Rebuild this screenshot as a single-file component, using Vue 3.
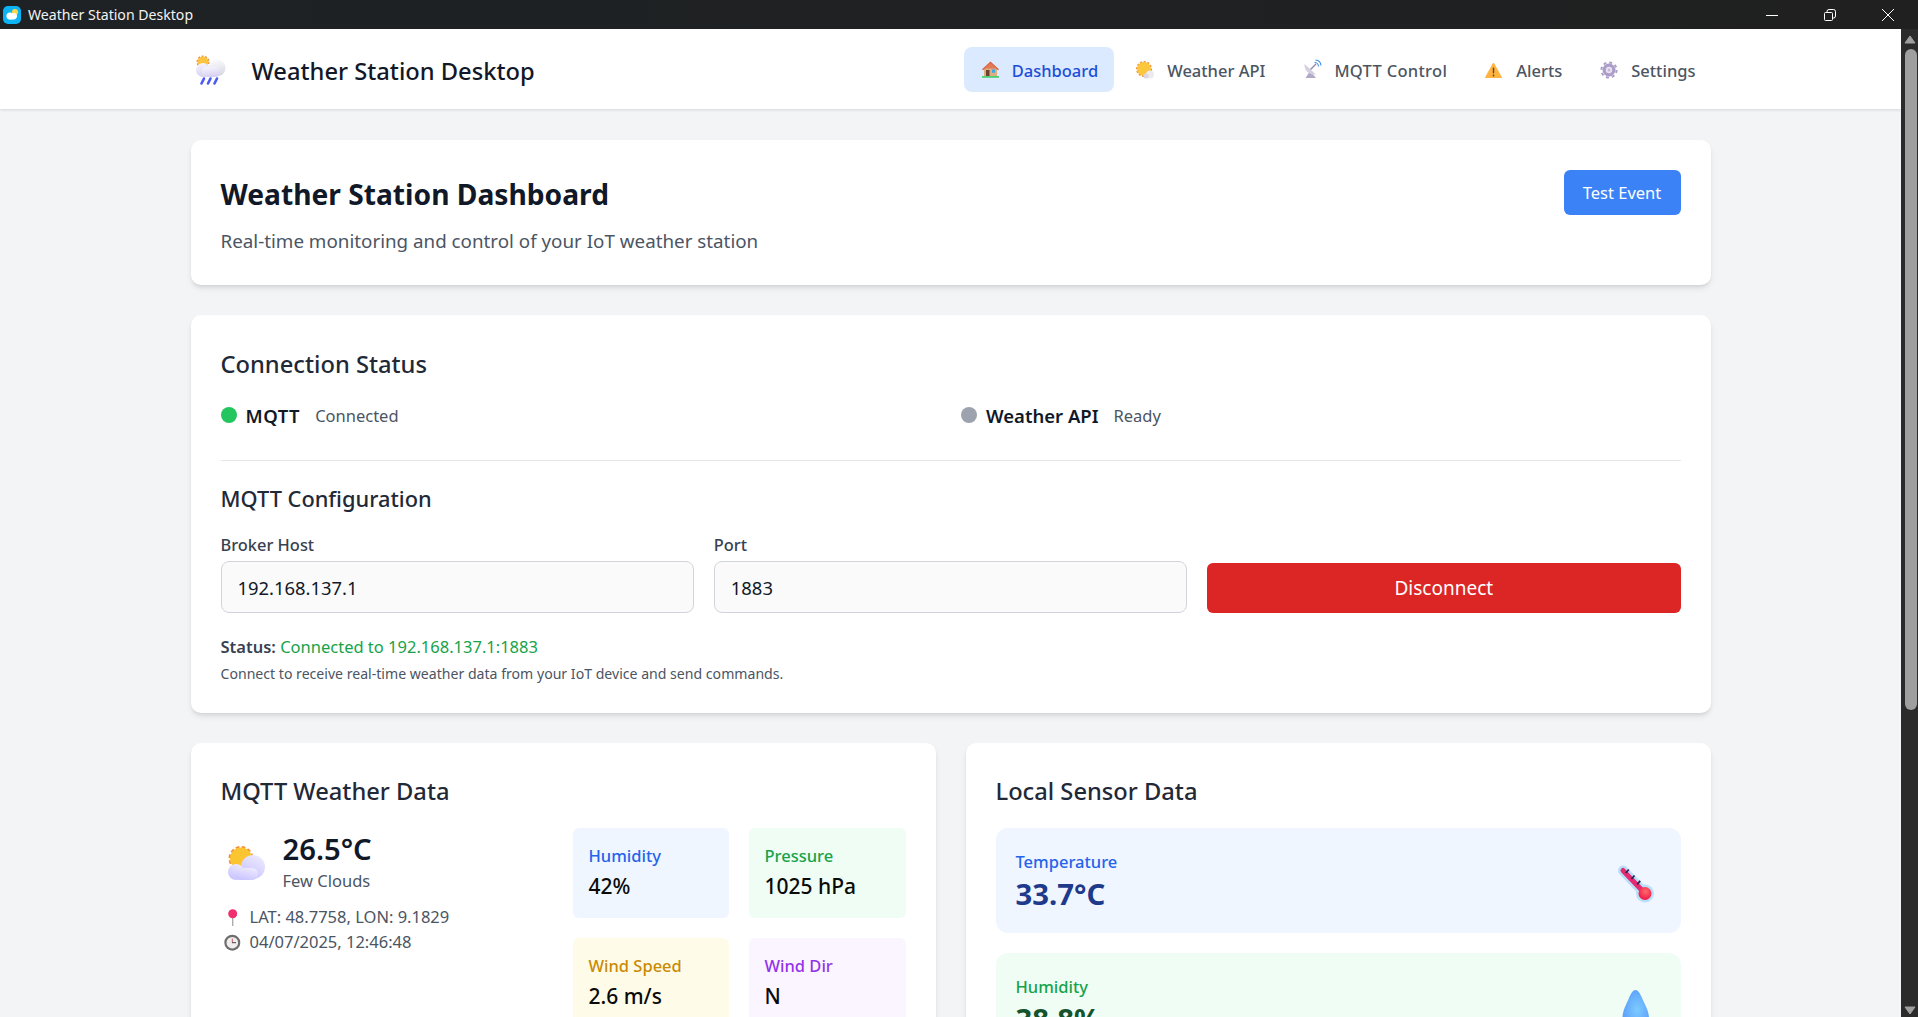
<script setup>
const navItems = [
  { key: 'home', label: 'Dashboard', active: true },
  { key: 'sun', label: 'Weather API' },
  { key: 'dish', label: 'MQTT Control' },
  { key: 'warn', label: 'Alerts' },
  { key: 'gear', label: 'Settings' }
]
const tiles = [
  { label: 'Humidity', value: '42%', cls: 'blue' },
  { label: 'Pressure', value: '1025 hPa', cls: 'green' },
  { label: 'Wind Speed', value: '2.6 m/s', cls: 'yellow' },
  { label: 'Wind Dir', value: 'N', cls: 'purple' }
]
</script>

<template>
  <div class="window">
    <header class="titlebar">
      <div class="app-id">
        <svg class="app-icon" viewBox="0 0 18 18">
          <rect width="18" height="18" rx="5" fill="#0db4f5" />
          <circle cx="12" cy="6" r="3" fill="#ffd84a" />
          <circle cx="7" cy="10" r="3.6" fill="#fff" />
          <circle cx="11" cy="10" r="3" fill="#fff" />
          <rect x="5" y="9.6" width="8" height="4" rx="2" fill="#fff" />
        </svg>
        <span>Weather Station Desktop</span>
      </div>
      <div class="controls">
        <svg viewBox="0 0 12 12"><path d="M0 6.500h12" stroke="#fff" fill="none" /></svg>
        <svg viewBox="0 0 12 12"><path d="M.5 4.500a1 1 0 0 1 1-1h6a1 1 0 0 1 1 1v6a1 1 0 0 1-1 1h-6a1 1 0 0 1-1-1zM3 3.500v-1a2 2 0 0 1 2-2h4.500a2 2 0 0 1 2 2v4.500a2 2 0 0 1-2 2h-1" stroke="#fff" fill="none" /></svg>
        <svg viewBox="0 0 12 12"><path d="M0 0l12 12M12 0L0 12" stroke="#fff" fill="none" /></svg>
      </div>
    </header>

    <div class="viewport">
      <div class="page">
        <nav class="nav">
          <div class="nav-inner">
            <div class="brand">
              <svg class="brand-icon" viewBox="0 0 33 33">
                <defs>
                  <linearGradient id="bc1" x1="0.4" y1="0" x2="0.6" y2="1"><stop offset="0" stop-color="#fbfbfd" /><stop offset="1" stop-color="#d6d6e2" /></linearGradient>
                  <linearGradient id="bc2" x1="0.4" y1="0" x2="0.6" y2="1"><stop offset="0" stop-color="#f5f3fb" /><stop offset="1" stop-color="#d5cff2" /></linearGradient>
                </defs>
                <circle cx="8" cy="9" r="5.500" fill="none" stroke="#ef8f3b" stroke-width="2" stroke-dasharray="2 1.400" />
                <circle cx="8" cy="9" r="5.500" fill="#fcc440" />
                <circle cx="22" cy="15" r="8.500" fill="url(#bc1)" />
                <circle cx="8" cy="17" r="7" fill="url(#bc2)" />
                <rect x="7" y="14" width="17" height="10" rx="4" fill="url(#bc2)" />
                <path d="M9 25.500l-2.500 5M15.500 25.500l-2.500 5M22 25.500l-2.500 5" stroke="#4a5af5" stroke-width="2.600" stroke-linecap="round" />
              </svg>
              <span class="brand-name">Weather Station Desktop</span>
            </div>
            <ul class="nav-list">
              <li v-for="n in navItems" :key="n.key" class="nav-item" :class="{ active: n.active }">
                <svg class="nav-icon" viewBox="0 0 20 20">
                  <template v-if="n.key === 'home'">
                    <rect x="2" y="17" width="17" height="1.800" fill="#4ccf70" />
                    <path d="M4 9h13v8H4z" fill="#dcae80" />
                    <path d="M1.800 10.500L10.500 2.500l8.700 8-1.500.5-7.200-5.500L3.300 11z" fill="#d9603f" />
                    <path d="M4 9.500l6.500-5.500 6.500 5.500z" fill="#e27a55" />
                    <rect x="6" y="11" width="3.500" height="6" fill="#6e4230" />
                    <rect x="12" y="10.500" width="3" height="3.200" fill="#3ea6e6" />
                  </template>
                  <template v-else-if="n.key === 'sun'">
                    <circle cx="9" cy="10" r="7" fill="none" stroke="#ef8f3b" stroke-width="2" stroke-dasharray="2 1.600" />
                    <circle cx="9" cy="10" r="7" fill="#fcc63d" />
                    <circle cx="15" cy="15.500" r="4" fill="#eeeaf0" />
                    <circle cx="11" cy="17" r="2.600" fill="#dcd8e2" />
                  </template>
                  <template v-else-if="n.key === 'dish'">
                    <path d="M3.500 19L8 12l6 7z" fill="#b3a9c6" />
                    <path d="M2.500 5C2 11 7 16.500 14 15.500z" fill="#d5cfe0" />
                    <path d="M8.500 10.500L14 5" stroke="#8e82a8" stroke-width="1.200" />
                    <path d="M12.500 3.500a4 4 0 0 1 4 4M13.500 1a6 6 0 0 1 5.500 5.500" stroke="#3f8ee8" stroke-width="1.100" fill="none" />
                  </template>
                  <template v-else-if="n.key === 'warn'">
                    <path d="M9.500 4L17.500 18.500H1.500z" fill="#ffb340" stroke="#ffb340" stroke-linejoin="round" />
                    <rect x="8.800" y="8.500" width="1.400" height="6" rx=".7" fill="#5a4632" />
                    <circle cx="9.500" cy="16.500" r=".9" fill="#5a4632" />
                  </template>
                  <template v-else>
                    <circle cx="10" cy="11" r="6.500" fill="#ab9dc8" />
                    <circle cx="10" cy="11" r="7.600" fill="none" stroke="#ab9dc8" stroke-width="2" stroke-dasharray="3 2.970" />
                    <circle cx="10" cy="11" r="3.200" fill="#e9e2f2" />
                    <circle cx="10" cy="11" r="1.500" fill="#c4b8d8" />
                  </template>
                </svg>
                <span class="nav-label">{{ n.label }}</span>
              </li>
            </ul>
          </div>
        </nav>

        <main class="content">
          <section class="card hero">
            <div>
              <h1>Weather Station Dashboard</h1>
              <p>Real-time monitoring and control of your IoT weather station</p>
            </div>
            <button class="btn-test">Test Event</button>
          </section>

          <section class="card conn">
            <h2>Connection Status</h2>
            <div class="conn-row">
              <div class="conn-cell"><i class="dot on"></i><b>MQTT</b><span>Connected</span></div>
              <div class="conn-cell"><i class="dot off"></i><b>Weather API</b><span>Ready</span></div>
            </div>
            <hr />
            <h3>MQTT Configuration</h3>
            <div class="form-row">
              <label>Broker Host<input value="192.168.137.1" /></label>
              <label>Port<input value="1883" /></label>
              <button class="btn-dis">Disconnect</button>
            </div>
            <p class="status"><b>Status:</b> <span>Connected to 192.168.137.1:1883</span></p>
            <p class="note">Connect to receive real-time weather data from your IoT device and send commands.</p>
          </section>

          <div class="two">
            <section class="card data">
              <h2>MQTT Weather Data</h2>
              <div class="mqtt-grid">
                <div class="now">
                  <div class="now-main">
                    <svg class="cloud-sun" viewBox="0 0 40 40">
                      <defs>
                        <linearGradient id="cl" x1="0.7" y1="0" x2="0.2" y2="1"><stop offset="0" stop-color="#ece9ff" /><stop offset="1" stop-color="#c7c2ff" /></linearGradient>
                      </defs>
                      <circle cx="15" cy="14.500" r="11" fill="none" stroke="#ef8f3b" stroke-width="3" stroke-dasharray="3.500 2.300" />
                      <circle cx="15" cy="14.500" r="11" fill="#fbc531" />
                      <circle cx="27" cy="23" r="12" fill="url(#cl)" />
                      <circle cx="10" cy="28" r="8" fill="url(#cl)" />
                      <rect x="8" y="24" width="24" height="12" rx="6" fill="url(#cl)" />
                    </svg>
                    <div class="now-text">
                      <div class="temp">26.5°C</div>
                      <div class="cond">Few Clouds</div>
                    </div>
                  </div>
                  <div class="meta">
                    <svg viewBox="0 0 18 18">
                      <path d="M8.700 9v9" stroke="#a8a8a8" stroke-width="1.300" />
                      <circle cx="8.700" cy="5.700" r="4.500" fill="#ef2f6e" />
                    </svg>
                    <span>LAT: 48.7758, LON: 9.1829</span>
                  </div>
                  <div class="meta">
                    <svg viewBox="0 0 18 18">
                      <circle cx="8.300" cy="9.700" r="8" fill="#6e6e6e" />
                      <circle cx="8.300" cy="9.700" r="5.800" fill="#f2eded" />
                      <path d="M8.300 5.500v4.200" stroke="#c25a6a" stroke-width="1" fill="none" />
                      <path d="M8 9.700h4" stroke="#444" stroke-width="1" fill="none" />
                    </svg>
                    <span>04/07/2025, 12:46:48</span>
                  </div>
                </div>
                <div class="tiles">
                  <div v-for="t in tiles" :key="t.label" class="tile" :class="t.cls">
                    <div class="tile-label">{{ t.label }}</div>
                    <div class="tile-value">{{ t.value }}</div>
                  </div>
                </div>
              </div>
            </section>

            <section class="card data">
              <h2>Local Sensor Data</h2>
              <div class="sensor blue">
                <div>
                  <div class="sensor-label">Temperature</div>
                  <div class="sensor-value">33.7°C</div>
                </div>
                <svg class="sensor-icon" viewBox="0 0 48 48">
                  <defs>
                    <radialGradient id="bulb" cx="55%" cy="35%" r="65%"><stop offset="0" stop-color="#ff6a6a" /><stop offset="1" stop-color="#ee1848" /></radialGradient>
                  </defs>
                  <path d="M10 13.500L32 36.500" stroke="#b9defa" stroke-width="10" stroke-linecap="round" />
                  <circle cx="32" cy="36.500" r="9" fill="#b9defa" />
                  <path d="M10 13.500L32 36.500" stroke="#e42a70" stroke-width="5" stroke-linecap="round" />
                  <circle cx="32" cy="36.500" r="6.500" fill="url(#bulb)" />
                  <path d="M12.800 16l3-3.500M18.500 22l3-3.500M24.200 27.300l3-3.500" stroke="#2e2350" stroke-width="1.800" />
                </svg>
              </div>
              <div class="sensor green">
                <div>
                  <div class="sensor-label">Humidity</div>
                  <div class="sensor-value">38.8%</div>
                </div>
                <svg class="sensor-icon" viewBox="0 0 48 48">
                  <defs>
                    <radialGradient id="dr" cx="55%" cy="50%" r="60%"><stop offset="0" stop-color="#7ccbff" /><stop offset="1" stop-color="#5a9cfb" /></radialGradient>
                  </defs>
                  <path d="M22.500 8C25 8 27 11 29 16C32 23 36 29 36 36C36 43 30 47 23 47C16 47 9.500 43 9.500 36C9.500 29 13 23 16 16C18 11 20 8 22.500 8z" fill="url(#dr)" />
                </svg>
              </div>
            </section>
          </div>
        </main>
      </div>

      <div class="scrollbar">
        <svg class="arrow" viewBox="0 0 12 9"><path d="M6 1l5 7H1z" fill="#9f9f9f" stroke="#9f9f9f" stroke-linejoin="round" /></svg>
        <div class="track"><div class="thumb"></div></div>
        <svg class="arrow" viewBox="0 0 12 9"><path d="M6 8L1 1h10z" fill="#9f9f9f" stroke="#9f9f9f" stroke-linejoin="round" /></svg>
      </div>
    </div>
  </div>
</template>

<style>
html, body { margin: 0; height: 100%; overflow: hidden; background: #f3f4f6; }
</style>

<style scoped>
* { box-sizing: border-box; }
.window { height: 1017px; display: flex; flex-direction: column; font-family: "Noto Sans", "Open Sans", sans-serif; color: #111827; overflow: hidden; }
.titlebar { height: 29px; flex: none; background: linear-gradient(90deg, #1e2225, #202020); display: flex; justify-content: space-between; align-items: center; color: #f2f2f2; font-size: 14.100px; }
.app-id { display: flex; align-items: center; gap: 7px; padding-left: 3px; }
.app-icon { width: 18px; height: 18px; }
.controls { display: flex; gap: 46px; padding-right: 24px; }
.controls svg { width: 12px; height: 12px; }
.viewport { flex: 1; min-height: 0; display: flex; }
.page { flex: 1; min-width: 0; overflow: hidden; background: #f3f4f6; }
.nav { height: 80px; background: #fff; box-shadow: 0 1px 3px rgba(0,0,0,.12); position: relative; }
.nav-inner { max-width: 1568px; height: 100%; margin: 0 auto; padding: 0 23px 0 28px; display: flex; justify-content: space-between; align-items: center; }
.brand { display: flex; align-items: center; gap: 24px; }
.brand-icon { width: 33px; height: 33px; margin-top: 1px; }
.brand-name { font-size: 23.700px; font-weight: 500; padding-top: 3px; }
.nav-list { list-style: none; margin: 0; padding: 0; display: flex; gap: 5px; }
.nav-item { display: flex; align-items: center; gap: 12px; height: 45px; padding: 0 16px; border-radius: 8px; font-size: 16.500px; font-weight: 500; color: #4b5563; }
.nav-item.active { background: #dbeafe; color: #1d4ed8; }
.nav-item:nth-child(3) .nav-label { letter-spacing: .3px; }
.nav-label { padding-top: 2px; }
.nav-icon { width: 20px; height: 20px; flex: none; }
.content { max-width: 1568px; margin: 0 auto; padding: 31px 24px; display: flex; flex-direction: column; gap: 30px; }
.card { background: #fff; border-radius: 10px; padding: 30px; box-shadow: 0 4px 6px -1px rgba(0,0,0,.1), 0 2px 4px -2px rgba(0,0,0,.1); }
.hero { height: 145px; display: flex; justify-content: space-between; align-items: flex-start; padding-top: 24px; }
.hero h1 { margin: 9px 0 12px; font-size: 28.200px; line-height: 42px; font-weight: 700; }
.hero p { margin: 0; font-size: 18.800px; line-height: 28px; color: #4b5563; }
.btn-test { margin-top: 6px; width: 117px; height: 45px; border: 0; border-radius: 6px; background: #3b82f6; color: #fff; font: inherit; font-size: 16.500px; padding-top: 1px; }
.conn { height: 398px; padding-top: 31px; }
h2 { margin: 0; font-size: 23.700px; line-height: 36px; font-weight: 500; color: #1f2937; }
.conn-row { margin-top: 17px; display: grid; grid-template-columns: 1fr 1fr; gap: 21px; height: 32px; }
.conn-cell { display: flex; align-items: center; font-size: 16.500px; color: #4b5563; }
.conn-cell b { color: #111827; font-size: 18.500px; font-weight: 600; margin: 0 15px 0 9px; }
.conn-cell:first-child b { letter-spacing: .5px; }
.dot { width: 16px; height: 16px; border-radius: 50%; }
.dot.on { background: #22c55e; }
.dot.off { background: #9ca3af; }
hr { border: 0; border-top: 1px solid #e5e7eb; margin: 29px 0 0; }
h3 { margin: 22px 0 0; font-size: 21.800px; line-height: 32px; font-weight: 500; color: #1f2937; }
.form-row { margin-top: 18px; display: grid; grid-template-columns: repeat(3, 1fr); gap: 20px; align-items: end; }
label { display: flex; flex-direction: column; gap: 4px; font-size: 16.400px; line-height: 24px; font-weight: 500; color: #374151; }
input { height: 52px; padding: 0 16px; border: 1px solid #d1d5db; border-radius: 8px; background: #fafafa; font: inherit; font-size: 18.400px; font-weight: 400; color: #111827; outline: 0; width: 100%; }
.btn-dis { height: 50px; border: 0; border-radius: 6px; background: #dc2626; color: #fff; font: inherit; font-size: 19px; }
.status { margin: 21px 0 0; font-size: 16.500px; line-height: 26px; color: #16a34a; }
.status b { color: #374151; font-weight: 600; }
.note { margin: 4px 0 0; font-size: 14.100px; line-height: 20px; color: #4b5563; }
.two { display: grid; grid-template-columns: 1fr 1fr; gap: 30px; }
.data { height: 600px; }
.mqtt-grid { margin-top: 19px; display: grid; grid-template-columns: 332px 333px; gap: 20px; }
.now-main { display: flex; align-items: flex-start; gap: 17px; padding-left: 5px; margin-bottom: 10px; }
.cloud-sun { width: 40px; height: 40px; margin-top: 16px; }
.temp { font-size: 29.200px; line-height: 40px; font-weight: 600; margin-top: 1px; }
.cond { font-size: 16.500px; line-height: 26px; color: #4b5563; margin-top: -1px; }
.meta { display: flex; align-items: center; gap: 8px; font-size: 16.500px; line-height: 25px; color: #4b5563; padding-left: 3px; }
.meta svg { width: 18px; height: 18px; flex: none; }
.tiles { display: grid; grid-template-columns: 156px 157px; gap: 20px; }
.tile { height: 90px; padding: 15px 15px 15px 16px; border-radius: 6px; }
.tile-label { font-size: 16.500px; line-height: 26px; font-weight: 500; }
.tile-value { font-size: 21px; line-height: 32px; font-weight: 500; color: #0a0a0a; margin-top: 1px; }
.blue { background: #eff6ff; }
.green { background: #f0fdf4; }
.yellow { background: #fefce8; }
.purple { background: #faf5ff; }
.tile.blue .tile-label { color: #2563eb; }
.tile.green .tile-label { color: #16a34a; }
.tile.yellow .tile-label { color: #ca8a04; }
.tile.purple .tile-label { color: #9333ea; }
.sensor { margin-top: 19px; height: 105px; padding: 0 20px; border-radius: 12px; display: flex; justify-content: space-between; align-items: center; }
.sensor + .sensor { margin-top: 20px; }
.sensor-label { font-size: 16.500px; line-height: 26px; font-weight: 500; }
.sensor-value { font-size: 29.300px; line-height: 38px; font-weight: 700; }
.sensor.blue .sensor-label { color: #2563eb; }
.sensor.blue .sensor-value { color: #1e3a8a; }
.sensor.green .sensor-label { color: #16a34a; }
.sensor.green .sensor-value { color: #14532d; }
.sensor-icon { width: 48px; height: 48px; flex: none; }
.scrollbar { width: 17px; flex: none; background: #2b2b2b; display: flex; flex-direction: column; align-items: center; padding: 6px 0 2px; }
.arrow { width: 12px; height: 9px; flex: none; }
.track { flex: 1; width: 100%; padding: 5px 1px 0 4px; }
.thumb { height: 661px; background: #9f9f9f; border-radius: 6px; }
</style>
